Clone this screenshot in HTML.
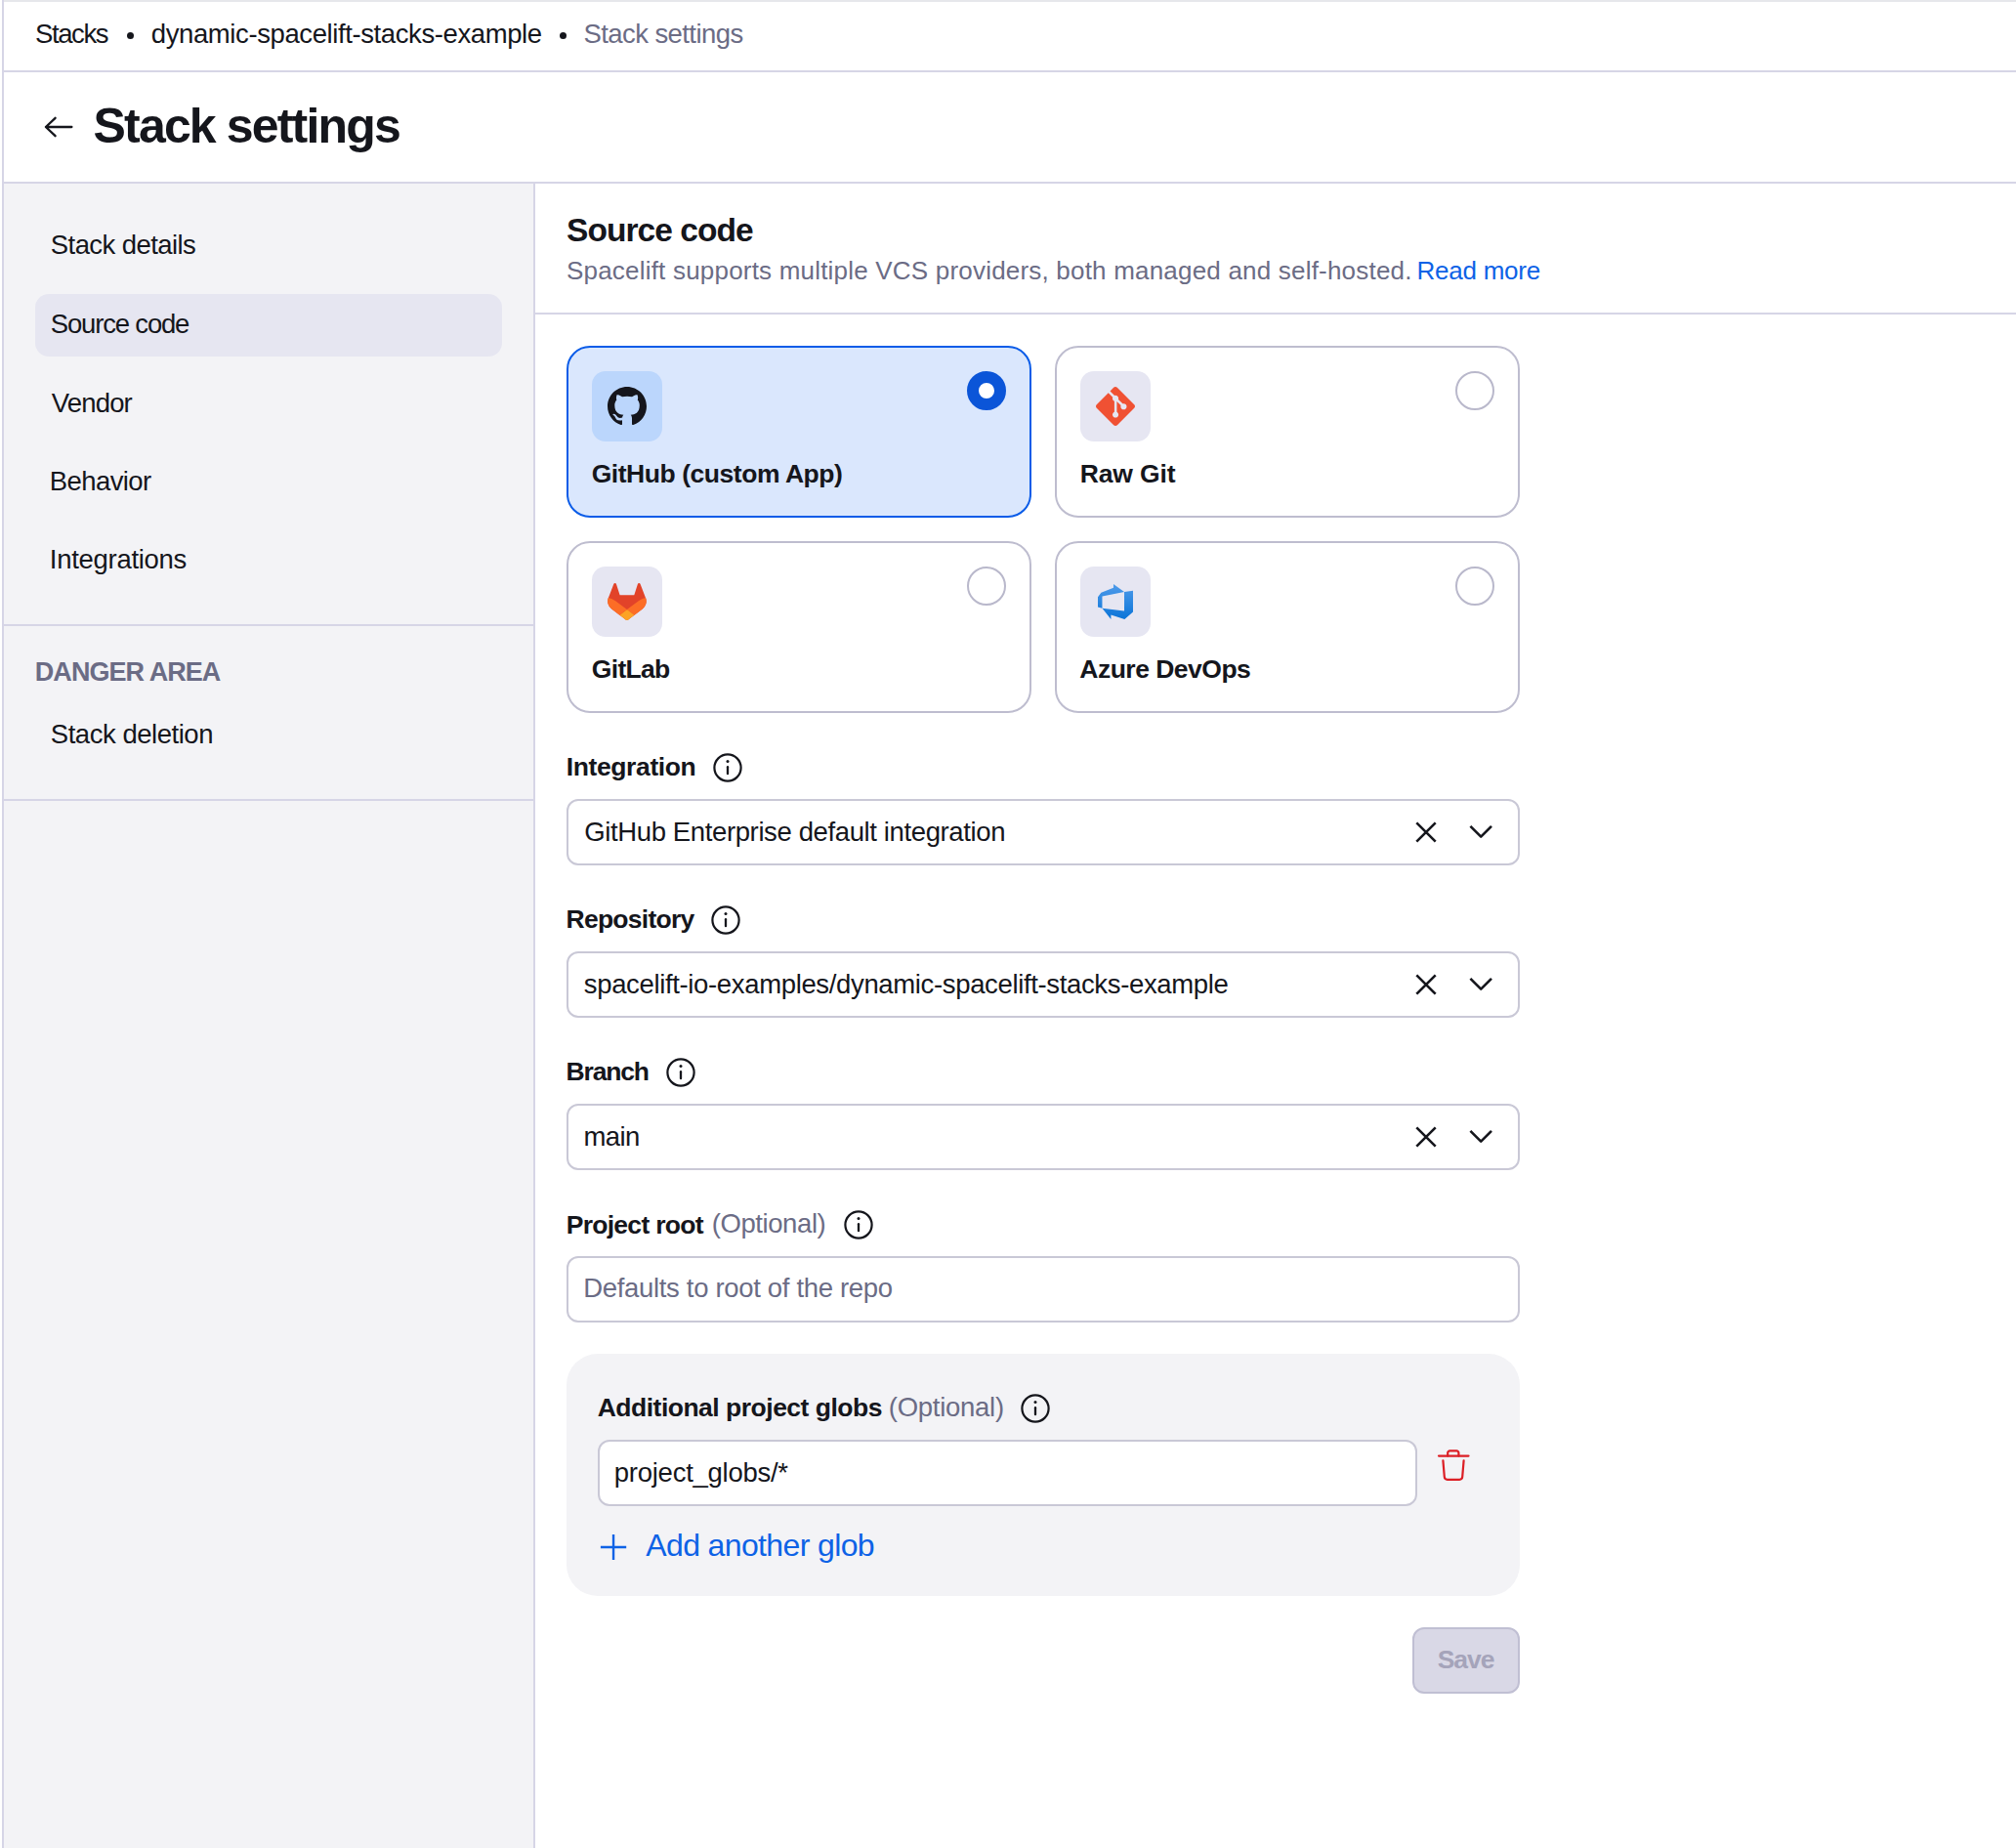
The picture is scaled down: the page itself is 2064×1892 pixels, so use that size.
<!DOCTYPE html>
<html><head><meta charset="utf-8"><title>Stack settings</title>
<style>
html,body{margin:0;padding:0;background:#fff;}
body{width:2064px;height:1892px;position:relative;overflow:hidden;font-family:"Liberation Sans",sans-serif;}
.t{position:absolute;white-space:nowrap;line-height:60px;}
</style></head><body>
<div style="position:absolute;left:4px;top:0px;width:2060px;height:2px;background:#e6e7eb"></div>
<div style="position:absolute;left:2px;top:0px;width:2px;height:1892px;background:#d6d5e6"></div>
<div style="position:absolute;left:4px;top:72px;width:2060px;height:2px;background:#d6d5e6"></div>
<div style="position:absolute;left:4px;top:186px;width:2060px;height:2px;background:#d6d5e6"></div>
<div style="position:absolute;left:4px;top:188px;width:542px;height:1704px;background:#f3f3f6"></div>
<div style="position:absolute;left:546px;top:188px;width:2px;height:1704px;background:#d6d5e6"></div>
<div style="position:absolute;left:4px;top:639px;width:542px;height:2px;background:#d6d5e6"></div>
<div style="position:absolute;left:4px;top:818px;width:542px;height:2px;background:#d6d5e6"></div>
<div style="position:absolute;left:36px;top:301px;width:478px;height:64px;background:#e6e6f1;border-radius:14px"></div>
<div style="position:absolute;left:548px;top:320px;width:1516px;height:2px;background:#d6d5e6"></div>
<div style="position:absolute;left:580px;top:354px;width:476px;height:176px;box-sizing:border-box;border:2px solid #0a5ce8;background:#dae7fd;border-radius:24px"></div>
<div style="position:absolute;left:1080px;top:354px;width:476px;height:176px;box-sizing:border-box;border:2px solid #bebdcf;background:#fff;border-radius:24px"></div>
<div style="position:absolute;left:580px;top:554px;width:476px;height:176px;box-sizing:border-box;border:2px solid #bebdcf;background:#fff;border-radius:24px"></div>
<div style="position:absolute;left:1080px;top:554px;width:476px;height:176px;box-sizing:border-box;border:2px solid #bebdcf;background:#fff;border-radius:24px"></div>
<div style="position:absolute;left:606px;top:380px;width:72px;height:72px;background:#bbd6fc;border-radius:14px"></div>
<div style="position:absolute;left:1106px;top:380px;width:72px;height:72px;background:#e6e6f2;border-radius:14px"></div>
<div style="position:absolute;left:606px;top:580px;width:72px;height:72px;background:#e6e6f2;border-radius:14px"></div>
<div style="position:absolute;left:1106px;top:580px;width:72px;height:72px;background:#e6e6f2;border-radius:14px"></div>
<div style="position:absolute;left:990px;top:380px;width:40px;height:40px;box-sizing:border-box;border:12px solid #0b55d8;background:#fff;border-radius:50%"></div>
<div style="position:absolute;left:1490px;top:380px;width:40px;height:40px;box-sizing:border-box;border:2px solid #b9b8cb;background:#fff;border-radius:50%"></div>
<div style="position:absolute;left:990px;top:580px;width:40px;height:40px;box-sizing:border-box;border:2px solid #b9b8cb;background:#fff;border-radius:50%"></div>
<div style="position:absolute;left:1490px;top:580px;width:40px;height:40px;box-sizing:border-box;border:2px solid #b9b8cb;background:#fff;border-radius:50%"></div>
<svg style="position:absolute;left:622px;top:396px" width="40" height="40" viewBox="0 0 16 16"><path fill="#15161c" d="M8 0C3.58 0 0 3.58 0 8c0 3.54 2.29 6.53 5.47 7.59.4.07.55-.17.55-.38 0-.19-.01-.82-.01-1.49-2.01.37-2.53-.49-2.69-.94-.09-.23-.48-.94-.82-1.13-.28-.15-.68-.52-.01-.53.63-.01 1.08.58 1.23.82.72 1.21 1.87.87 2.33.66.07-.52.28-.87.51-1.07-1.78-.2-3.64-.89-3.64-3.95 0-.87.31-1.59.82-2.15-.08-.2-.36-1.02.08-2.12 0 0 .67-.21 2.2.82.64-.18 1.32-.27 2-.27.68 0 1.36.09 2 .27 1.53-1.04 2.2-.82 2.2-.82.44 1.1.16 1.92.08 2.12.51.56.82 1.27.82 2.15 0 3.07-1.87 3.75-3.65 3.95.29.25.54.73.54 1.48 0 1.07-.01 1.93-.01 2.2 0 .21.15.46.55.38A8.013 8.013 0 0016 8c0-4.42-3.58-8-8-8z"/></svg>
<svg style="position:absolute;left:1122px;top:396px" width="40" height="40" viewBox="0 0 24 24"><path fill="#f05133" d="M23.546 10.93L13.067.452c-.604-.603-1.582-.603-2.188 0L8.708 2.627l2.76 2.76c.645-.215 1.379-.07 1.889.441.516.515.658 1.258.438 1.9l2.658 2.66c.645-.223 1.387-.078 1.9.435.721.72.721 1.884 0 2.604-.719.719-1.881.719-2.6 0-.539-.541-.674-1.337-.404-1.996L12.86 8.955v6.525c.176.086.342.203.488.348.713.721.713 1.883 0 2.6-.719.721-1.889.721-2.609 0-.719-.719-.719-1.879 0-2.598.182-.18.387-.316.605-.406V8.835c-.217-.091-.424-.222-.6-.401-.545-.545-.676-1.342-.396-2.009L7.636 3.7.45 10.881c-.6.605-.6 1.584 0 2.189l10.48 10.477c.604.604 1.582.604 2.186 0l10.43-10.43c.605-.603.605-1.582 0-2.187"/></svg>
<svg style="position:absolute;left:622px;top:597px" width="40" height="38" viewBox="0 0 25 24"><path fill="#E24329" d="m24.507 9.5-.034-.09L21.082.562a.896.896 0 0 0-1.694.091l-2.29 7.01H7.825L5.535.653a.898.898 0 0 0-1.694-.09L.451 9.411.416 9.5a6.297 6.297 0 0 0 2.09 7.278l.012.01.03.022 5.16 3.867 2.56 1.935 1.554 1.176a1.051 1.051 0 0 0 1.268 0l1.555-1.176 2.56-1.935 5.197-3.89.014-.01A6.297 6.297 0 0 0 24.507 9.5Z"/><path fill="#FC6D26" d="m24.507 9.5-.034-.09a11.44 11.44 0 0 0-4.56 2.051l-7.447 5.632 4.742 3.584 5.197-3.89.014-.01A6.297 6.297 0 0 0 24.507 9.5Z"/><path fill="#FCA326" d="m7.707 20.677 2.56 1.935 1.555 1.176a1.051 1.051 0 0 0 1.268 0l1.555-1.176 2.56-1.935-4.743-3.584-4.755 3.584Z"/><path fill="#FC6D26" d="M5.01 11.461a11.43 11.43 0 0 0-4.56-2.05L.416 9.5a6.297 6.297 0 0 0 2.09 7.278l.012.01.03.022 5.16 3.867 4.745-3.584-7.444-5.632Z"/></svg>
<svg style="position:absolute;left:1124px;top:598px" width="36" height="36" viewBox="0 0 24 24"><defs><linearGradient id="az" x1="0" y1="0" x2="0" y2="1"><stop offset="0" stop-color="#4f9bea"/><stop offset="1" stop-color="#0a74d8"/></linearGradient></defs><path fill="url(#az)" d="M0 8.877L2.247 5.91l8.405-3.416V.022l7.37 5.393L2.966 8.338v8.225L0 15.707zm24-4.45v14.651l-5.753 4.9-9.303-3.057v3.056l-5.978-7.416 15.057 1.798V5.415z"/></svg>
<svg style="position:absolute;left:40px;top:112px" width="42" height="38" viewBox="40 112 42 38"><path d="M73.4 130H47M56.6 120.8L46.9 130L56.6 139.2" fill="none" stroke="#15161c" stroke-width="2.3" stroke-linecap="round" stroke-linejoin="round"/></svg>
<div style="position:absolute;left:129.5px;top:32.5px;width:7px;height:7px;background:#15161c;border-radius:50%"></div>
<div style="position:absolute;left:573.1px;top:32.5px;width:7px;height:7px;background:#15161c;border-radius:50%"></div>
<div style="position:absolute;left:580px;top:818px;width:976px;height:68px;box-sizing:border-box;border:2px solid #c9c8d6;background:#fff;border-radius:12px"></div>
<svg style="position:absolute;left:1440px;top:832px" width="96" height="40" viewBox="0 0 96 40"><path d="M10.3 10.3L29.7 29.7M29.7 10.3L10.3 29.7" stroke="#15161c" stroke-width="2.6"/><path d="M65.4 13.9L76.2 24.7L87 13.9" fill="none" stroke="#15161c" stroke-width="2.6" stroke-linejoin="round"/></svg>
<div style="position:absolute;left:580px;top:974px;width:976px;height:68px;box-sizing:border-box;border:2px solid #c9c8d6;background:#fff;border-radius:12px"></div>
<svg style="position:absolute;left:1440px;top:988px" width="96" height="40" viewBox="0 0 96 40"><path d="M10.3 10.3L29.7 29.7M29.7 10.3L10.3 29.7" stroke="#15161c" stroke-width="2.6"/><path d="M65.4 13.9L76.2 24.7L87 13.9" fill="none" stroke="#15161c" stroke-width="2.6" stroke-linejoin="round"/></svg>
<div style="position:absolute;left:580px;top:1130px;width:976px;height:68px;box-sizing:border-box;border:2px solid #c9c8d6;background:#fff;border-radius:12px"></div>
<svg style="position:absolute;left:1440px;top:1144px" width="96" height="40" viewBox="0 0 96 40"><path d="M10.3 10.3L29.7 29.7M29.7 10.3L10.3 29.7" stroke="#15161c" stroke-width="2.6"/><path d="M65.4 13.9L76.2 24.7L87 13.9" fill="none" stroke="#15161c" stroke-width="2.6" stroke-linejoin="round"/></svg>
<div style="position:absolute;left:580px;top:1286px;width:976px;height:68px;box-sizing:border-box;border:2px solid #c9c8d6;background:#fff;border-radius:12px"></div>
<div style="position:absolute;left:580px;top:1386px;width:976px;height:248px;background:#f3f3f6;border-radius:32px"></div>
<div style="position:absolute;left:612px;top:1474px;width:839px;height:68px;box-sizing:border-box;border:2px solid #c9c8d6;background:#fff;border-radius:12px"></div>
<svg style="position:absolute;left:1468px;top:1480px" width="40" height="40" viewBox="0 0 40 40"><g fill="none" stroke="#dc1f26" stroke-width="2.2" stroke-linecap="round" stroke-linejoin="round"><path d="M5 10.6H35.5"/><path d="M14.2 10.6V7.6a2.2 2.2 0 0 1 2.2-2.2h6.8a2.2 2.2 0 0 1 2.2 2.2v3"/><path d="M9.4 15.3L10.8 32a3 3 0 0 0 3 2.8h12.4a3 3 0 0 0 3-2.8l1.4-16.7"/></g></svg>
<svg style="position:absolute;left:608px;top:1564px" width="40" height="40" viewBox="0 0 40 40"><path d="M20.05 6.9V33M6.9 20H33.2" stroke="#0d62e6" stroke-width="2.4"/></svg>
<div style="position:absolute;left:1446px;top:1666px;width:110px;height:68px;box-sizing:border-box;border:2px solid #c0bfd3;background:#d9d8e6;border-radius:12px"></div>
<svg style="position:absolute;left:729px;top:770px" width="32" height="32" viewBox="0 0 32 32"><circle cx="16" cy="16" r="13.6" fill="none" stroke="#15161c" stroke-width="2.2"/><circle cx="16" cy="9.6" r="1.5" fill="#15161c"/><path d="M16 15.2V22.2" stroke="#15161c" stroke-width="2.3" stroke-linecap="round"/></svg>
<svg style="position:absolute;left:726.9px;top:926px" width="32" height="32" viewBox="0 0 32 32"><circle cx="16" cy="16" r="13.6" fill="none" stroke="#15161c" stroke-width="2.2"/><circle cx="16" cy="9.6" r="1.5" fill="#15161c"/><path d="M16 15.2V22.2" stroke="#15161c" stroke-width="2.3" stroke-linecap="round"/></svg>
<svg style="position:absolute;left:681px;top:1082px" width="32" height="32" viewBox="0 0 32 32"><circle cx="16" cy="16" r="13.6" fill="none" stroke="#15161c" stroke-width="2.2"/><circle cx="16" cy="9.6" r="1.5" fill="#15161c"/><path d="M16 15.2V22.2" stroke="#15161c" stroke-width="2.3" stroke-linecap="round"/></svg>
<svg style="position:absolute;left:863px;top:1238px" width="32" height="32" viewBox="0 0 32 32"><circle cx="16" cy="16" r="13.6" fill="none" stroke="#15161c" stroke-width="2.2"/><circle cx="16" cy="9.6" r="1.5" fill="#15161c"/><path d="M16 15.2V22.2" stroke="#15161c" stroke-width="2.3" stroke-linecap="round"/></svg>
<svg style="position:absolute;left:1044px;top:1426px" width="32" height="32" viewBox="0 0 32 32"><circle cx="16" cy="16" r="13.6" fill="none" stroke="#15161c" stroke-width="2.2"/><circle cx="16" cy="9.6" r="1.5" fill="#15161c"/><path d="M16 15.2V22.2" stroke="#15161c" stroke-width="2.3" stroke-linecap="round"/></svg>
<div class="t" style="left:36.0px;top:5.4px;font-weight:400;font-size:27.5px;letter-spacing:-1.40px;color:#15161c">Stacks</div>
<div class="t" style="left:154.8px;top:5.4px;font-weight:400;font-size:27.5px;letter-spacing:-0.40px;color:#15161c">dynamic-spacelift-stacks-example</div>
<div class="t" style="left:597.4px;top:5.4px;font-weight:400;font-size:27.5px;letter-spacing:-0.57px;color:#6b6c85">Stack settings</div>
<div class="t" style="left:95.6px;top:99.3px;font-weight:700;font-size:50.0px;letter-spacing:-1.84px;color:#15161c">Stack settings</div>
<div class="t" style="left:51.8px;top:221.4px;font-weight:400;font-size:27.5px;letter-spacing:-0.57px;color:#15161c">Stack details</div>
<div class="t" style="left:51.8px;top:301.9px;font-weight:400;font-size:27.5px;letter-spacing:-1.18px;color:#15161c">Source code</div>
<div class="t" style="left:52.8px;top:382.6px;font-weight:400;font-size:27.5px;letter-spacing:-0.84px;color:#15161c">Vendor</div>
<div class="t" style="left:50.8px;top:462.9px;font-weight:400;font-size:27.5px;letter-spacing:-0.59px;color:#15161c">Behavior</div>
<div class="t" style="left:50.8px;top:542.9px;font-weight:400;font-size:27.5px;letter-spacing:-0.29px;color:#15161c">Integrations</div>
<div class="t" style="left:35.8px;top:657.5px;font-weight:700;font-size:27.0px;letter-spacing:-0.95px;color:#6b6c85">DANGER AREA</div>
<div class="t" style="left:51.8px;top:722.4px;font-weight:400;font-size:27.5px;letter-spacing:-0.47px;color:#15161c">Stack deletion</div>
<div class="t" style="left:580.0px;top:205.8px;font-weight:700;font-size:33.5px;letter-spacing:-0.95px;color:#15161c">Source code</div>
<div class="t" style="left:580.0px;top:246.6px;font-weight:400;font-size:26.0px;letter-spacing:0.20px;color:#6b6c85">Spacelift supports multiple VCS providers, both managed and self-hosted.</div>
<div class="t" style="left:1450.5px;top:246.6px;font-weight:400;font-size:26.0px;letter-spacing:-0.25px;color:#0d62e6">Read more</div>
<div class="t" style="left:605.7px;top:455.0px;font-weight:700;font-size:26.5px;letter-spacing:-0.46px;color:#15161c">GitHub (custom App)</div>
<div class="t" style="left:1105.7px;top:455.0px;font-weight:700;font-size:26.5px;letter-spacing:-0.12px;color:#15161c">Raw Git</div>
<div class="t" style="left:605.8px;top:655.2px;font-weight:700;font-size:26.5px;letter-spacing:-0.68px;color:#15161c">GitLab</div>
<div class="t" style="left:1105.3px;top:655.2px;font-weight:700;font-size:26.5px;letter-spacing:-0.51px;color:#15161c">Azure DevOps</div>
<div class="t" style="left:579.7px;top:755.3px;font-weight:700;font-size:26.5px;letter-spacing:-0.38px;color:#15161c">Integration</div>
<div class="t" style="left:579.5px;top:911.3px;font-weight:700;font-size:26.5px;letter-spacing:-0.73px;color:#15161c">Repository</div>
<div class="t" style="left:579.5px;top:1067.3px;font-weight:700;font-size:26.5px;letter-spacing:-1.16px;color:#15161c">Branch</div>
<div class="t" style="left:579.7px;top:1223.5px;font-weight:700;font-size:26.5px;letter-spacing:-0.72px;color:#15161c">Project root</div>
<div class="t" style="left:728.7px;top:1223.2px;font-weight:400;font-size:27.5px;letter-spacing:-0.41px;color:#6b6c85">(Optional)</div>
<div class="t" style="left:611.7px;top:1411.3px;font-weight:700;font-size:26.5px;letter-spacing:-0.50px;color:#15161c">Additional project globs</div>
<div class="t" style="left:909.8px;top:1411.0px;font-weight:400;font-size:27.5px;letter-spacing:-0.27px;color:#6b6c85">(Optional)</div>
<div class="t" style="left:598.3px;top:821.9px;font-weight:400;font-size:27.5px;letter-spacing:-0.38px;color:#15161c">GitHub Enterprise default integration</div>
<div class="t" style="left:597.8px;top:977.9px;font-weight:400;font-size:27.5px;letter-spacing:-0.35px;color:#15161c">spacelift-io-examples/dynamic-spacelift-stacks-example</div>
<div class="t" style="left:597.4px;top:1133.9px;font-weight:400;font-size:27.5px;letter-spacing:-0.57px;color:#15161c">main</div>
<div class="t" style="left:597.3px;top:1289.4px;font-weight:400;font-size:27.5px;letter-spacing:-0.33px;color:#6b6c85">Defaults to root of the repo</div>
<div class="t" style="left:628.8px;top:1478.0px;font-weight:400;font-size:27.5px;letter-spacing:-0.26px;color:#15161c">project_globs/*</div>
<div class="t" style="left:661.3px;top:1552.0px;font-weight:400;font-size:32.0px;letter-spacing:-0.63px;color:#0d62e6">Add another glob</div>
<div class="t" style="left:1471.7px;top:1669.3px;font-weight:700;font-size:26.5px;letter-spacing:-1.03px;color:#a5a4ba">Save</div>
</body></html>
